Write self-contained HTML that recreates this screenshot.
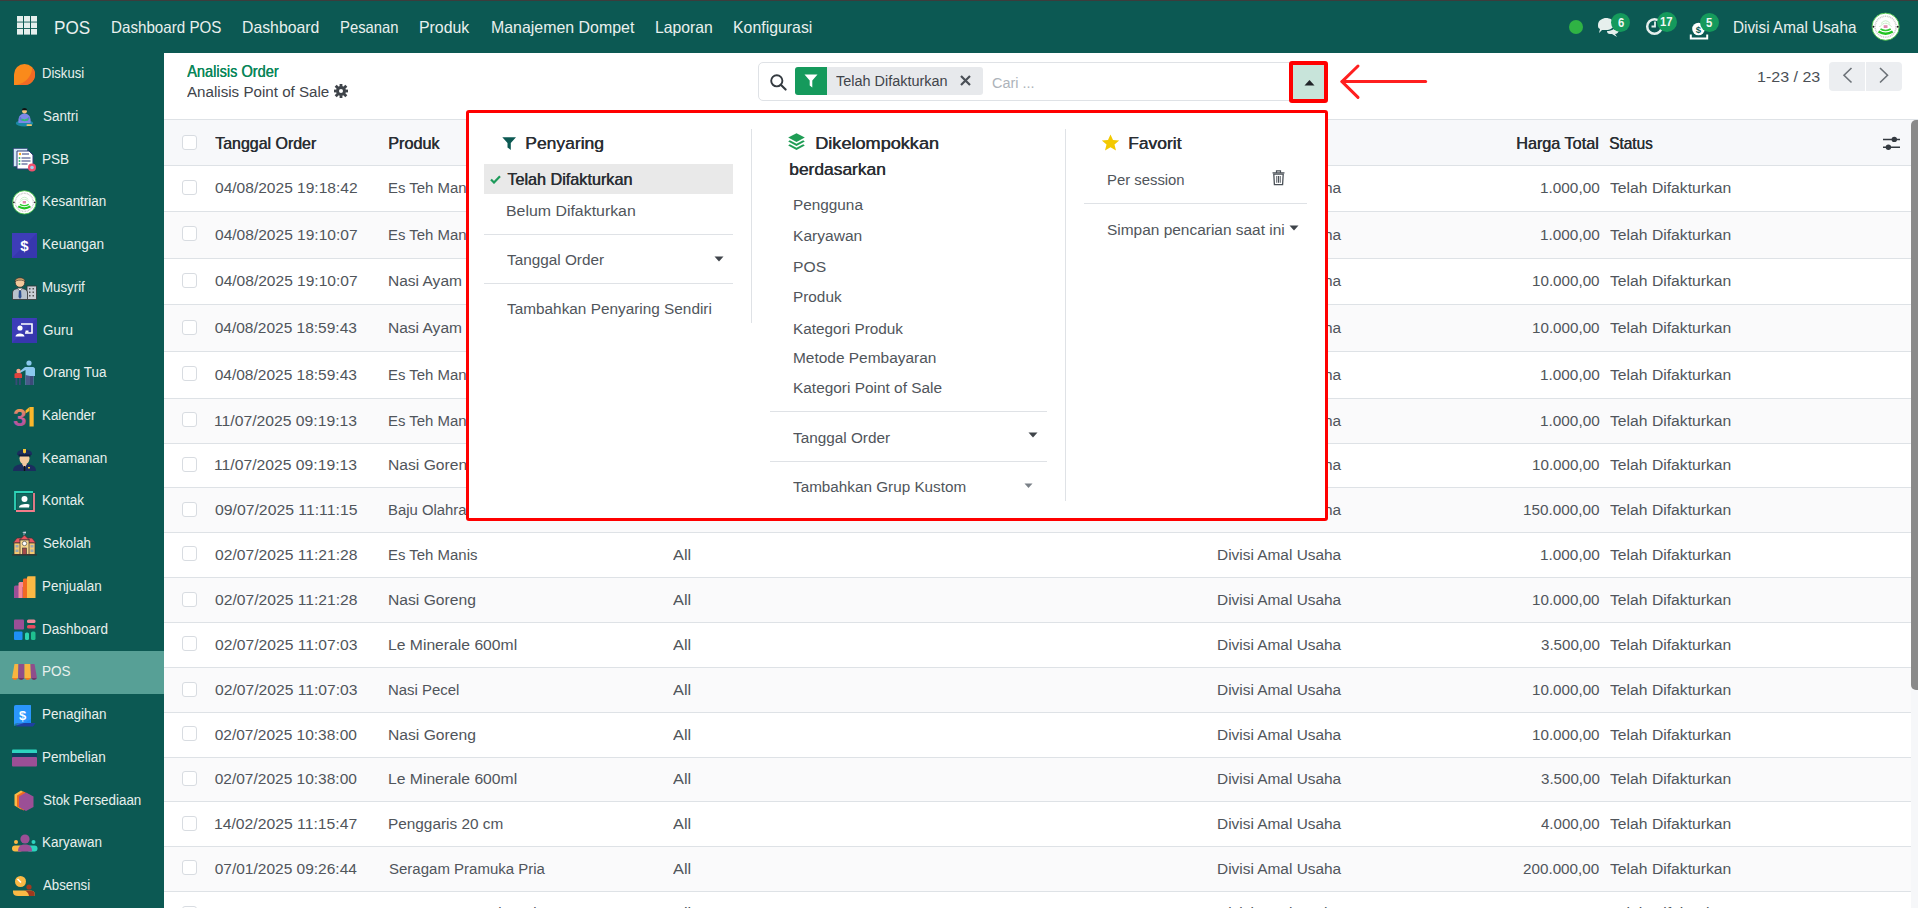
<!DOCTYPE html>
<html><head><meta charset="utf-8"><style>
html,body{margin:0;padding:0;}
body{width:1918px;height:908px;overflow:hidden;position:relative;background:#fff;font-family:"Liberation Sans",sans-serif;}
.t{position:absolute;white-space:nowrap;line-height:1;transform-origin:0 0;}
.r{position:absolute;display:block;}
</style></head><body>
<div class="r" style="left:0px;top:0px;width:1918px;height:1px;background:#3c3c3c;"></div>
<div class="r" style="left:0px;top:1px;width:1918px;height:52px;background:#0c5953;"></div>
<div class="r" style="left:0px;top:53px;width:164px;height:855px;background:#0c5953;"></div>
<div class="r" style="left:0px;top:651px;width:164px;height:43px;background:#57a096;"></div>
<svg class="r" style="left:17px;top:16px" width="20" height="19" viewBox="0 0 20 19"><rect x="0" y="0.0" width="6" height="5.6" fill="#e6efed"/><rect x="7" y="0.0" width="6" height="5.6" fill="#e6efed"/><rect x="14" y="0.0" width="6" height="5.6" fill="#e6efed"/><rect x="0" y="6.5" width="6" height="5.6" fill="#e6efed"/><rect x="7" y="6.5" width="6" height="5.6" fill="#e6efed"/><rect x="14" y="6.5" width="6" height="5.6" fill="#e6efed"/><rect x="0" y="13.0" width="6" height="5.6" fill="#e6efed"/><rect x="7" y="13.0" width="6" height="5.6" fill="#e6efed"/><rect x="14" y="13.0" width="6" height="5.6" fill="#e6efed"/></svg>
<div class="t" style="left:53.62px;top:19.00px;font-size:18px;color:#e9f0ee;transform:scaleX(0.9510);">POS</div>
<div class="t" style="left:111.26px;top:19.00px;font-size:16.5px;color:#e9f0ee;transform:scaleX(0.9191);">Dashboard POS</div>
<div class="t" style="left:242.31px;top:19.00px;font-size:16.5px;color:#e9f0ee;transform:scaleX(0.9579);">Dashboard</div>
<div class="t" style="left:340.39px;top:19.00px;font-size:16.5px;color:#e9f0ee;transform:scaleX(0.8995);">Pesanan</div>
<div class="t" style="left:419.00px;top:19.00px;font-size:16.5px;color:#e9f0ee;transform:scaleX(0.9617);">Produk</div>
<div class="t" style="left:490.60px;top:19.00px;font-size:16.5px;color:#e9f0ee;transform:scaleX(0.9650);">Manajemen Dompet</div>
<div class="t" style="left:655.21px;top:19.00px;font-size:16.5px;color:#e9f0ee;transform:scaleX(0.9544);">Laporan</div>
<div class="t" style="left:733.20px;top:19.00px;font-size:16.5px;color:#e9f0ee;transform:scaleX(0.9613);">Konfigurasi</div>
<div class="r" style="left:1569px;top:20px;width:14px;height:14px;border-radius:50%;background:#2fb344"></div>
<svg class="r" style="left:1596px;top:17px" width="24" height="20" viewBox="0 0 24 20"><path d="M2 8 C2 3,7 1,10 1 C14 1,18 3,18 7 C18 11,14 13,10 13 L6 13 L3 16 L4 12 C2 11,2 10,2 8Z" fill="#e6efed"/><path d="M11 14 C15 14,19 12,20 9 C22 10,23 12,23 13 C23 15,21 17,19 17 L21 20 L16 17 L14 17 C12 17,11 16,11 14Z" fill="#e6efed"/></svg>
<div class="r" style="left:1611.3px;top:12.899999999999999px;width:19.0px;height:19.0px;border-radius:50%;background:#159a5c"></div>
<div class="t" style="left:1617.67px;top:17.00px;font-size:12.5px;color:#f2f7f5;font-weight:bold;transform:scaleX(0.9000);">6</div>
<svg class="r" style="left:1645px;top:16px" width="22" height="20" viewBox="0 0 22 20"><circle cx="9.5" cy="10.5" r="7.3" fill="none" stroke="#e6efed" stroke-width="2.5"/><path d="M10 5.5 L10 10.5 L6.5 10.5" stroke="#e6efed" stroke-width="1.8" fill="none"/></svg>
<div class="r" style="left:1656.6px;top:11.600000000000001px;width:20px;height:20px;border-radius:50%;background:#159a5c"></div>
<div class="t" style="left:1660.25px;top:16.00px;font-size:12.5px;color:#f2f7f5;font-weight:bold;transform:scaleX(0.9000);">17</div>
<svg class="r" style="left:1689px;top:18px" width="22" height="22" viewBox="0 0 22 22"><circle cx="9.5" cy="11" r="6.3" fill="#ffffff"/><text x="9.5" y="14.6" font-size="9.5" text-anchor="middle" fill="#0c5953" font-family="Liberation Sans" font-weight="bold">$</text><path d="M1.8 16.5 L1.8 20.5 L18.2 20.5 L18.2 16.5" fill="none" stroke="#ffffff" stroke-width="2"/></svg>
<div class="r" style="left:1700.0px;top:13.0px;width:19.0px;height:19.0px;border-radius:50%;background:#159a5c"></div>
<div class="t" style="left:1706.35px;top:17.00px;font-size:12.5px;color:#f2f7f5;font-weight:bold;transform:scaleX(0.9000);">5</div>
<div class="t" style="left:1733.05px;top:19.00px;font-size:16.5px;color:#e9f0ee;transform:scaleX(0.9282);">Divisi Amal Usaha</div>
<svg class="r" style="left:1871px;top:12px" width="30" height="30" viewBox="0 0 30 30"><circle cx="14.6" cy="14.7" r="13.6" fill="#ffffff" stroke="#43c043" stroke-width="0.9"/><circle cx="14.6" cy="14.7" r="10.5" fill="none" stroke="#c9c9c9" stroke-width="1.6" stroke-dasharray="1 0.8"/><circle cx="14.6" cy="14.7" r="8.2" fill="#fff"/><path d="M8.5 15 Q14.6 7.5 20.7 15" fill="none" stroke="#9ade9a" stroke-width="0.9" stroke-dasharray="1 0.6"/><path d="M10 11.5 Q14.6 6 19.2 11.5" fill="none" stroke="#b5e8b5" stroke-width="0.8"/><rect x="12.7" y="13.2" width="3.8" height="2.8" fill="#e08ab0"/><path d="M9.5 17 Q14.6 20 19.7 17" fill="none" stroke="#2ecc2e" stroke-width="1.6"/><path d="M7.5 19.5 Q14.6 24 21.7 19.5" fill="none" stroke="#22c422" stroke-width="2.4"/><circle cx="2.4" cy="14.7" r="1" fill="#222"/><circle cx="26.8" cy="14.7" r="1" fill="#222"/></svg>
<div class="t" style="left:42.25px;top:65.00px;font-size:15.5px;color:#e8f0ee;transform:scaleX(0.8431);">Diskusi</div>
<div class="t" style="left:42.69px;top:108.00px;font-size:15.5px;color:#e8f0ee;transform:scaleX(0.8673);">Santri</div>
<div class="t" style="left:42.20px;top:151.00px;font-size:15.5px;color:#e8f0ee;transform:scaleX(0.8765);">PSB</div>
<div class="t" style="left:42.22px;top:193.00px;font-size:15.5px;color:#e8f0ee;transform:scaleX(0.8670);">Kesantrian</div>
<div class="t" style="left:42.20px;top:236.00px;font-size:15.5px;color:#e8f0ee;transform:scaleX(0.8776);">Keuangan</div>
<div class="t" style="left:42.23px;top:279.00px;font-size:15.5px;color:#e8f0ee;transform:scaleX(0.8573);">Musyrif</div>
<div class="t" style="left:42.65px;top:322.00px;font-size:15.5px;color:#e8f0ee;transform:scaleX(0.8683);">Guru</div>
<div class="t" style="left:42.69px;top:364.00px;font-size:15.5px;color:#e8f0ee;transform:scaleX(0.8657);">Orang Tua</div>
<div class="t" style="left:42.22px;top:407.00px;font-size:15.5px;color:#e8f0ee;transform:scaleX(0.8618);">Kalender</div>
<div class="t" style="left:42.21px;top:450.00px;font-size:15.5px;color:#e8f0ee;transform:scaleX(0.8701);">Keamanan</div>
<div class="t" style="left:42.21px;top:492.00px;font-size:15.5px;color:#e8f0ee;transform:scaleX(0.8686);">Kontak</div>
<div class="t" style="left:42.70px;top:535.00px;font-size:15.5px;color:#e8f0ee;transform:scaleX(0.8547);">Sekolah</div>
<div class="t" style="left:42.22px;top:578.00px;font-size:15.5px;color:#e8f0ee;transform:scaleX(0.8645);">Penjualan</div>
<div class="t" style="left:42.21px;top:621.00px;font-size:15.5px;color:#e8f0ee;transform:scaleX(0.8706);">Dashboard</div>
<div class="t" style="left:42.21px;top:663.00px;font-size:15.5px;color:#e8f0ee;transform:scaleX(0.8743);">POS</div>
<div class="t" style="left:42.21px;top:706.00px;font-size:15.5px;color:#e8f0ee;transform:scaleX(0.8702);">Penagihan</div>
<div class="t" style="left:42.21px;top:749.00px;font-size:15.5px;color:#e8f0ee;transform:scaleX(0.8709);">Pembelian</div>
<div class="t" style="left:42.69px;top:792.00px;font-size:15.5px;color:#e8f0ee;transform:scaleX(0.8644);">Stok Persediaan</div>
<div class="t" style="left:42.21px;top:834.00px;font-size:15.5px;color:#e8f0ee;transform:scaleX(0.8715);">Karyawan</div>
<div class="t" style="left:43.26px;top:877.00px;font-size:15.5px;color:#e8f0ee;transform:scaleX(0.8554);">Absensi</div>
<svg class="r" style="left:14px;top:64px" width="21" height="21" viewBox="0 0 21 21"><path d="M0 21 L0 10.5 A10.5 10.5 0 1 1 10.5 21Z" fill="#fa8a1b"/><path d="M18.2 3.3 A10.5 10.5 0 0 1 10.5 21 L2.5 21 C11.5 19,18.2 12.5,18.2 3.3Z" fill="#f26a24"/></svg>
<svg class="r" style="left:15px;top:107px" width="20" height="20" viewBox="0 0 20 20"><ellipse cx="9.5" cy="16.3" rx="8.7" ry="3.2" fill="#1b88a6"/><path d="M3.5 16 C3 11,4 7,9.5 6.5 C15 7,16 11,15.5 16Z" fill="#7d89e8"/><path d="M4.5 10 C4 13,6 14.5,9 14 L9 12.5 C7 12.5,6 12,6 10Z" fill="#6574d6"/><path d="M14.5 10 C15 13,13 14.5,10 14 L10 12.5 C12 12.5,13 12,13 10Z" fill="#6574d6"/><path d="M6.5 11.5 L9.5 12.5 L13.5 11 L13 13.5 L9.5 14.2 L6.5 13.2Z" fill="#2fbf71"/><circle cx="9.5" cy="4.2" r="2.4" fill="#f2c27b"/><path d="M6.9 3 C6.9 0.2,12.1 0.2,12.1 3 L12.1 3.3 L6.9 3.3Z" fill="#111"/><rect x="11.5" y="17.3" width="5.5" height="1.8" rx="0.8" fill="#f5c76b"/></svg>
<svg class="r" style="left:13px;top:148px" width="24" height="24" viewBox="0 0 24 24"><rect x="0.5" y="0.5" width="14" height="18" fill="#d4e9f7" stroke="#2f3b7a" stroke-width="0.6"/><path d="M4 3 L16 3 L20 7 L20 21 L4 21Z" fill="#ffffff" stroke="#2f3b7a" stroke-width="1"/><circle cx="7" cy="6" r="1.2" fill="#f6a51f"/><rect x="9" y="5.5" width="7" height="1" fill="#2f3b7a"/><circle cx="6.5" cy="10" r="1" fill="#3cb878"/><rect x="8.5" y="9.5" width="9" height="1" fill="#2f3b7a"/><circle cx="6.5" cy="13" r="1" fill="#3cb878"/><rect x="8.5" y="12.5" width="9" height="1" fill="#2f3b7a"/><circle cx="6.5" cy="16" r="1" fill="#3cb878"/><rect x="8.5" y="15.5" width="6" height="1" fill="#2f3b7a"/><circle cx="19" cy="19.5" r="4" fill="#f0506e"/><circle cx="19" cy="19.5" r="1.8" fill="#9fd0f0"/></svg>
<svg class="r" style="left:12px;top:190px" width="25" height="25" viewBox="0 0 25 25"><g transform="translate(-0.2 -0.3) scale(0.86)"><circle cx="14.6" cy="14.7" r="13.6" fill="#ffffff" stroke="#43c043" stroke-width="1"/><circle cx="14.6" cy="14.7" r="10.5" fill="none" stroke="#c9c9c9" stroke-width="1.6" stroke-dasharray="1 0.8"/><circle cx="14.6" cy="14.7" r="8.2" fill="#fff"/><path d="M8.5 15 Q14.6 7.5 20.7 15" fill="none" stroke="#9ade9a" stroke-width="0.9" stroke-dasharray="1 0.6"/><path d="M10 11.5 Q14.6 6 19.2 11.5" fill="none" stroke="#b5e8b5" stroke-width="0.8"/><rect x="12.7" y="13.2" width="3.8" height="2.8" fill="#e08ab0"/><path d="M9.5 17 Q14.6 20 19.7 17" fill="none" stroke="#2ecc2e" stroke-width="1.6"/><path d="M7.5 19.5 Q14.6 24 21.7 19.5" fill="none" stroke="#22c422" stroke-width="2.4"/><circle cx="2.4" cy="14.7" r="1" fill="#222"/><circle cx="26.8" cy="14.7" r="1" fill="#222"/></g></svg>
<svg class="r" style="left:12px;top:233px" width="25" height="25" viewBox="0 0 25 25"><rect width="25" height="25" fill="#3d3db8"/><path d="M0 25 L25 0 L25 25Z" fill="#3434a6" opacity="0.6"/><text x="12.5" y="18" font-size="15" font-weight="bold" text-anchor="middle" fill="#fff" font-family="Liberation Sans">$</text></svg>
<svg class="r" style="left:12px;top:276px" width="25" height="24" viewBox="0 0 25 24"><rect x="15" y="10" width="9.5" height="13.5" fill="#c9ced6" stroke="#333" stroke-width="0.8"/><rect x="17" y="12" width="1.5" height="1.5" fill="#555"/><rect x="17" y="15.5" width="1.5" height="1.5" fill="#555"/><rect x="17" y="19" width="1.5" height="1.5" fill="#555"/><rect x="20.5" y="12" width="1.5" height="1.5" fill="#555"/><rect x="20.5" y="15.5" width="1.5" height="1.5" fill="#555"/><rect x="20.5" y="19" width="1.5" height="1.5" fill="#555"/><path d="M0.5 23.5 L0.5 17 C0.5 14,3 12.5,8 12.5 C13 12.5,15.5 14,15.5 17 L15.5 23.5Z" fill="#b8c2cc" stroke="#333" stroke-width="0.8"/><path d="M7 13 L9 13 L9.5 21 L8 23 L6.5 21Z" fill="#2d4f8f"/><circle cx="8" cy="6.5" r="4.8" fill="#f3c99b" stroke="#333" stroke-width="0.8"/><path d="M3 6 C2.5 0.5,13.5 0.5,13 6 C12 3.5,4 3.5,3 6Z" fill="#d9a86c" stroke="#333" stroke-width="0.6"/><path d="M5.5 12.5 L8 15 L10.5 12.5" fill="#fff" stroke="#333" stroke-width="0.5"/></svg>
<svg class="r" style="left:12px;top:318px" width="25" height="25" viewBox="0 0 25 25"><rect width="25" height="25" fill="#3d3db8"/><path d="M0 25 L25 0 L25 25Z" fill="#3434a6" opacity="0.6"/><path d="M9 6 L20 6 L20 15 L13 15" fill="none" stroke="#fff" stroke-width="1.6"/><circle cx="8" cy="10" r="2.6" fill="#fff"/><path d="M3.5 18.5 C3.5 14.5,12.5 14.5,12.5 18.5Z" fill="#fff"/><rect x="13.5" y="12.5" width="3" height="2" fill="#fff"/></svg>
<svg class="r" style="left:14px;top:360px" width="22" height="26" viewBox="0 0 22 26"><circle cx="15" cy="3" r="2.6" fill="#8bc8ee"/><path d="M11 7 L19 7 C20 7,21 8,21 9 L21 16 L19.5 16 L19.5 25 L16 25 L16 17 L14.5 17 L14.5 25 L11.5 25 L11.5 10 L6 13 L5 12 Z" fill="#8bc8ee"/><path d="M11.5 15 L11.5 25 L16 25 L16 16Z" fill="#4a5a8a"/><path d="M19.5 16 L19.5 25 L16 25 L16 16Z" fill="#3c4a7a"/><circle cx="4.5" cy="11" r="2.2" fill="#f5a58a"/><path d="M0.5 14 C0.5 13,2 13,4.5 13 C7 13,8 13.5,8 15 L8 18 L0.5 18Z" fill="#e0433d"/><rect x="1.5" y="18" width="1.8" height="7" fill="#3a4a78"/><rect x="5" y="18" width="1.8" height="7" fill="#3a4a78"/></svg>
<svg class="r" style="left:13px;top:405px" width="24" height="23" viewBox="0 0 24 23"><defs><linearGradient id="g31" x1="0" y1="0" x2="0" y2="1"><stop offset="0" stop-color="#fbb72c"/><stop offset="0.55" stop-color="#c65b9f"/><stop offset="1" stop-color="#9c4f96"/></linearGradient></defs><text x="0" y="21" font-size="24" font-weight="bold" fill="url(#g31)" font-family="Liberation Sans" letter-spacing="-1">3</text><rect x="16.5" y="2" width="4.2" height="19.5" fill="#fbb72c"/><path d="M16.5 2 L12.5 5.5 L12.5 8.5 L16.5 6Z" fill="#fbb72c"/></svg>
<svg class="r" style="left:12px;top:446px" width="25" height="26" viewBox="0 0 25 26"><path d="M1 25 C1 20,5 18,12.5 18 C20 18,24 20,24 25Z" fill="#1b2d5e"/><path d="M10 18 L15 18 L12.5 22Z" fill="#f2c9a0"/><rect x="11.8" y="20" width="1.4" height="5" fill="#111"/><rect x="16" y="21" width="2" height="1.5" fill="#f5c73b"/><ellipse cx="12.5" cy="12.5" rx="5" ry="6" fill="#f2c9a0"/><path d="M5 8 C5 2,20 2,20 8 L20 9 L5 9Z" fill="#1b2d5e"/><rect x="6.5" y="8.5" width="12" height="2" fill="#0e1a3a"/><path d="M11 3 L14 3 L14 6.5 L12.5 7.5 L11 6.5Z" fill="#f5c73b"/></svg>
<svg class="r" style="left:14px;top:491px" width="21" height="21" viewBox="0 0 21 21"><path d="M1 19 L1 1 L19 1" fill="none" stroke="#2ed3b7" stroke-width="1.8"/><path d="M20 2 L20 20 L2 20" fill="none" stroke="#f47c8a" stroke-width="1.8"/><rect x="3" y="3" width="15" height="15" fill="#1b7367" opacity="0.6"/><circle cx="10.5" cy="8" r="3" fill="#fff"/><path d="M5 16.5 C5 12.5,15.5 12.5,15.5 14 L15 16.5Z" fill="#fff"/></svg>
<svg class="r" style="left:12px;top:531px" width="25" height="25" viewBox="0 0 25 25"><rect x="11.5" y="0.5" width="1" height="4" fill="#9ab"/><path d="M10 1.5 L14 0.5 L14 2.5Z" fill="#c5d0dc"/><path d="M1 12 L5 7 L20 7 L24 12Z" fill="#e8555f" stroke="#333" stroke-width="0.7"/><path d="M7.5 9 L12.5 4 L17.5 9Z" fill="#e8555f" stroke="#333" stroke-width="0.7"/><rect x="2" y="12" width="21" height="11.5" fill="#f4c86f" stroke="#333" stroke-width="0.7"/><rect x="8" y="9" width="9" height="14.5" fill="#f7d78e" stroke="#333" stroke-width="0.7"/><circle cx="12.5" cy="12.5" r="2.2" fill="#fff" stroke="#333" stroke-width="0.6"/><rect x="10.5" y="17" width="4" height="6.5" fill="#a34a4a" stroke="#333" stroke-width="0.6"/><rect x="3.5" y="14" width="3" height="2.5" fill="#9aa7b5"/><rect x="3.5" y="18.5" width="3" height="2.5" fill="#9aa7b5"/><rect x="18.5" y="14" width="3" height="2.5" fill="#9aa7b5"/><rect x="18.5" y="18.5" width="3" height="2.5" fill="#9aa7b5"/><rect x="0" y="23.3" width="25" height="1.2" fill="#333"/></svg>
<svg class="r" style="left:14px;top:576px" width="22" height="22" viewBox="0 0 22 22"><path d="M0 22 L0 11 Q0 9.5,1.5 9.5 L8 9.5 L8 22Z" fill="#9b4f96"/><path d="M4.5 22 L4.5 7.5 Q4.5 6,6 6 L12 6 L12 22Z" fill="#f48a9a"/><path d="M8.5 22 L8.5 11 L12 11 L12 22Z" fill="#8e2f4f" opacity="0.7"/><path d="M9 22 L9 3.5 Q9 2.5,10.5 2.5 L16 2.5 L16 22Z" fill="#f16a23"/><path d="M13 22 L13 1.5 Q13 0.2,14.5 0.2 L21.5 0.2 L21.5 22Z" fill="#fbb945"/></svg>
<svg class="r" style="left:14px;top:619px" width="22" height="22" viewBox="0 0 22 22"><rect x="0" y="0.5" width="10" height="10" rx="1" fill="#9b4f96"/><rect x="13" y="0.5" width="8.5" height="3.5" rx="1.5" fill="#f48a9a"/><rect x="13" y="6" width="8.5" height="3.5" rx="1.5" fill="#e84a5f"/><rect x="0" y="12.5" width="8.5" height="8.5" rx="1" fill="#1e8ff5"/><rect x="11" y="13.5" width="4" height="7.5" rx="1.5" fill="#2dd4b0"/><rect x="17" y="12.5" width="4.5" height="8.5" rx="1.5" fill="#1fbf8f"/></svg>
<svg class="r" style="left:12px;top:663px" width="25" height="19" viewBox="0 0 25 19"><path d="M2.5 1 L6.5 1 L6 15 L0 15Z" fill="#f9b540"/><path d="M6.5 1 L12.5 1 L12.5 15 L6 15Z" fill="#8f4e8b"/><path d="M12.5 1 L18.5 1 L19 15 L12.5 15Z" fill="#f9b540"/><path d="M18.5 1 L22.5 1 L25 15 L19 15Z" fill="#8f4e8b"/><path d="M0 15 Q3 19,6 15Z" fill="#f27b1f"/><path d="M6 15 Q9.2 19,12.5 15Z" fill="#6d3669"/><path d="M12.5 15 Q15.7 19,19 15Z" fill="#f27b1f"/><path d="M19 15 Q22 19,25 15Z" fill="#6d3669"/></svg>
<svg class="r" style="left:14px;top:705px" width="22" height="22" viewBox="0 0 22 22"><path d="M2 0 L16 0 Q17 0,17 1 L17 18 L4 18 Q0 18,0 21 L0 2 Q0 0,2 0Z" fill="#1d8cf8"/><path d="M4 18 L21.5 18 L19 21.5 L2 21.5Z" fill="#1e3fa0"/><path d="M0 2 Q0 0,2 0 L17 0 L17 14 Q10 19,0 21Z" fill="#38a0ff" opacity="0.5"/><text x="8.5" y="14.5" font-size="13" font-weight="bold" text-anchor="middle" fill="#fff" font-family="Liberation Sans">$</text></svg>
<svg class="r" style="left:12px;top:749px" width="25" height="18" viewBox="0 0 25 18"><rect x="0" y="0.5" width="25" height="4.5" rx="1" fill="#2dd4bf"/><rect x="0" y="4" width="25" height="4.5" fill="#0c3f5e"/><rect x="0" y="8" width="25" height="9.5" rx="1" fill="#9b4f96"/></svg>
<svg class="r" style="left:14px;top:790px" width="21" height="22" viewBox="0 0 21 22"><path d="M7 0.5 L14 4.5 L14 15.5 L7 19.5 L0.5 15.5 L0.5 4.5Z" fill="#fbb945"/><path d="M9.5 1.5 L16.5 5.5 L16.5 16.5 L9.5 20.5 L3 16.5 L3 5.5Z" fill="#f16a23"/><path d="M12 2.5 L19.5 6.5 L19.5 17 L12 21 L5 17 L5 6.5Z" fill="#9b4f96"/></svg>
<svg class="r" style="left:12px;top:834px" width="26" height="19" viewBox="0 0 26 19"><circle cx="13" cy="5" r="4.6" fill="#9b4f96"/><circle cx="4" cy="8" r="2" fill="#fbb945"/><circle cx="21.5" cy="8" r="2" fill="#2dd4bf"/><rect x="0" y="11.5" width="11" height="6" rx="3" fill="#fbb945"/><rect x="14.5" y="11.5" width="11" height="6" rx="3" fill="#2dd4bf"/><path d="M6 17.5 C6 12,9 10.5,13 10.5 C17 10.5,20 12,20 17.5Z" fill="#9b4f96"/></svg>
<svg class="r" style="left:13px;top:876px" width="23" height="21" viewBox="0 0 23 21"><circle cx="7.5" cy="5.5" r="5.5" fill="#fbb945"/><path d="M4.5 3 L8 6.5" stroke="#fff" stroke-width="1.6"/><circle cx="16" cy="11" r="2.6" fill="#a0391f"/><path d="M0 14.5 L17 14.5 Q21.5 14.5,21.5 17 L21.5 20 L5 20 Q0 20,0 16Z" fill="#fbb945"/><path d="M11 14.5 L17 14.5 Q21.5 14.5,21.5 17 L21.5 20 L16 20 Q15 15,11 14.5Z" fill="#a0391f"/></svg>
<div class="t" style="left:187.26px;top:63.00px;font-size:16.2px;color:#088659;transform:scaleX(0.9000);text-shadow:0.45px 0 0 #088659;">Analisis Order</div>
<div class="t" style="left:187.25px;top:84.00px;font-size:15.5px;color:#3f444a;transform:scaleX(0.9772);">Analisis Point of Sale</div>
<svg class="r" style="left:334px;top:84px" width="14" height="14" viewBox="0 0 14 14"><rect x="5.6" y="-0.5" width="2.8" height="3.2" fill="#3f444a" transform="rotate(0 7 7)"/><rect x="5.6" y="-0.5" width="2.8" height="3.2" fill="#3f444a" transform="rotate(45 7 7)"/><rect x="5.6" y="-0.5" width="2.8" height="3.2" fill="#3f444a" transform="rotate(90 7 7)"/><rect x="5.6" y="-0.5" width="2.8" height="3.2" fill="#3f444a" transform="rotate(135 7 7)"/><rect x="5.6" y="-0.5" width="2.8" height="3.2" fill="#3f444a" transform="rotate(180 7 7)"/><rect x="5.6" y="-0.5" width="2.8" height="3.2" fill="#3f444a" transform="rotate(225 7 7)"/><rect x="5.6" y="-0.5" width="2.8" height="3.2" fill="#3f444a" transform="rotate(270 7 7)"/><rect x="5.6" y="-0.5" width="2.8" height="3.2" fill="#3f444a" transform="rotate(315 7 7)"/><circle cx="7" cy="7" r="5" fill="#3f444a"/><circle cx="7" cy="7" r="2" fill="#fff"/></svg>
<div class="r" style="left:758px;top:62px;width:570px;height:39px;border:1px solid #dfe2e6;border-radius:5px;box-sizing:border-box;background:#fff"></div>
<svg class="r" style="left:770px;top:74px" width="17" height="17" viewBox="0 0 17 17"><circle cx="6.8" cy="6.8" r="5.6" fill="none" stroke="#343a40" stroke-width="1.9"/><path d="M10.8 10.8 L15.6 15.6" stroke="#343a40" stroke-width="2.1" stroke-linecap="round"/></svg>
<div class="r" style="left:795px;top:67px;width:188px;height:28px;border-radius:3px;background:#e7e9ec"></div>
<div class="r" style="left:795px;top:67px;width:32px;height:28px;border-radius:3px 0 0 3px;background:#159a5c"></div>
<svg class="r" style="left:804px;top:74px" width="14" height="14" viewBox="0 0 14 14"><path d="M0.5 0.5 L13.5 0.5 L8.3 6.5 L8.3 13.5 L5.7 11.5 L5.7 6.5Z" fill="#fff"/></svg>
<div class="t" style="left:836.17px;top:73.00px;font-size:15.5px;color:#3f444a;transform:scaleX(0.9320);">Telah Difakturkan</div>
<svg class="r" style="left:960px;top:75px" width="11" height="11" viewBox="0 0 11 11"><path d="M1 1 L10 10 M10 1 L1 10" stroke="#4a5057" stroke-width="2.2"/></svg>
<div class="t" style="left:991.70px;top:75.00px;font-size:15.5px;color:#adb3ba;transform:scaleX(0.9310);">Cari ...</div>
<div class="r" style="left:1289px;top:60.5px;width:39px;height:42.5px;border:4px solid #ff0000;border-radius:3px;box-sizing:border-box;background:#c8e4da"></div>
<svg class="r" style="left:1304px;top:79px" width="11" height="7" viewBox="0 0 11 7"><path d="M0.5 6.5 L5.5 1 L10.5 6.5Z" fill="#212529"/></svg>
<svg class="r" style="left:1338px;top:62px" width="92" height="40" viewBox="0 0 92 40"><path d="M4 19.6 L87.6 19.6" stroke="#ff1f1f" stroke-width="3" stroke-linecap="round"/><path d="M20 4 L4 19.6 L20 35.4" fill="none" stroke="#ff1f1f" stroke-width="3" stroke-linecap="round" stroke-linejoin="round"/></svg>
<div class="t" style="left:1756.91px;top:69.00px;font-size:15.5px;color:#4a4f55;transform:scaleX(1.0329);">1-23 / 23</div>
<div class="r" style="left:1829px;top:62px;width:36px;height:29px;border-radius:4px 0 0 4px;background:#eceef1"></div>
<div class="r" style="left:1866px;top:62px;width:36px;height:29px;border-radius:0 4px 4px 0;background:#eceef1"></div>
<svg class="r" style="left:1842px;top:67px" width="11" height="17" viewBox="0 0 11 17"><path d="M9.5 1 L2 8.2 L9.5 15.5" fill="none" stroke="#6c7278" stroke-width="1.6"/></svg>
<svg class="r" style="left:1879px;top:67px" width="11" height="17" viewBox="0 0 11 17"><path d="M1 1 L8.5 8.2 L1 15.5" fill="none" stroke="#6c7278" stroke-width="1.6"/></svg>
<div class="r" style="left:164px;top:119px;width:1747px;height:1px;background:#dee2e6;"></div>
<div class="r" style="left:164px;top:120px;width:1747px;height:45px;background:#f7f8fa;"></div>
<div class="r" style="left:164px;top:212px;width:1747px;height:46px;background:#fafafb;"></div>
<div class="r" style="left:164px;top:305px;width:1747px;height:46px;background:#fafafb;"></div>
<div class="r" style="left:164px;top:399px;width:1747px;height:44px;background:#fafafb;"></div>
<div class="r" style="left:164px;top:488px;width:1747px;height:44px;background:#fafafb;"></div>
<div class="r" style="left:164px;top:578px;width:1747px;height:44px;background:#fafafb;"></div>
<div class="r" style="left:164px;top:668px;width:1747px;height:44px;background:#fafafb;"></div>
<div class="r" style="left:164px;top:758px;width:1747px;height:43px;background:#fafafb;"></div>
<div class="r" style="left:164px;top:847px;width:1747px;height:44px;background:#fafafb;"></div>
<div class="r" style="left:164px;top:165px;width:1747px;height:1px;background:#dee2e6;"></div>
<div class="r" style="left:164px;top:211px;width:1747px;height:1px;background:#dee2e6;"></div>
<div class="r" style="left:164px;top:258px;width:1747px;height:1px;background:#dee2e6;"></div>
<div class="r" style="left:164px;top:304px;width:1747px;height:1px;background:#dee2e6;"></div>
<div class="r" style="left:164px;top:351px;width:1747px;height:1px;background:#dee2e6;"></div>
<div class="r" style="left:164px;top:398px;width:1747px;height:1px;background:#dee2e6;"></div>
<div class="r" style="left:164px;top:443px;width:1747px;height:1px;background:#dee2e6;"></div>
<div class="r" style="left:164px;top:487px;width:1747px;height:1px;background:#dee2e6;"></div>
<div class="r" style="left:164px;top:532px;width:1747px;height:1px;background:#dee2e6;"></div>
<div class="r" style="left:164px;top:577px;width:1747px;height:1px;background:#dee2e6;"></div>
<div class="r" style="left:164px;top:622px;width:1747px;height:1px;background:#dee2e6;"></div>
<div class="r" style="left:164px;top:667px;width:1747px;height:1px;background:#dee2e6;"></div>
<div class="r" style="left:164px;top:712px;width:1747px;height:1px;background:#dee2e6;"></div>
<div class="r" style="left:164px;top:757px;width:1747px;height:1px;background:#dee2e6;"></div>
<div class="r" style="left:164px;top:801px;width:1747px;height:1px;background:#dee2e6;"></div>
<div class="r" style="left:164px;top:846px;width:1747px;height:1px;background:#dee2e6;"></div>
<div class="r" style="left:164px;top:891px;width:1747px;height:1px;background:#dee2e6;"></div>
<div class="r" style="left:182px;top:134.5px;width:15px;height:15px;border:1px solid #d8dce1;border-radius:3px;box-sizing:border-box;background:#fff"></div>
<div class="t" style="left:214.96px;top:135.00px;font-size:16.4px;color:#2a2e33;transform:scaleX(0.9729);text-shadow:0.45px 0 0 #2a2e33;">Tanggal Order</div>
<div class="t" style="left:387.67px;top:135.00px;font-size:16.4px;color:#2a2e33;transform:scaleX(0.9881);text-shadow:0.45px 0 0 #2a2e33;">Produk</div>
<div class="t" style="left:1515.97px;top:135.00px;font-size:16.4px;color:#2a2e33;transform:scaleX(0.9883);text-shadow:0.45px 0 0 #2a2e33;">Harga Total</div>
<div class="t" style="left:1609.10px;top:135.00px;font-size:16.4px;color:#2a2e33;transform:scaleX(0.9391);text-shadow:0.45px 0 0 #2a2e33;">Status</div>
<svg class="r" style="left:1882px;top:134px" width="19" height="17" viewBox="0 0 19 17"><path d="M1 5.4 L18 5.4 M1 13.3 L18 13.3" stroke="#343a40" stroke-width="1.5"/><circle cx="12.3" cy="5.4" r="2.7" fill="#343a40"/><circle cx="6.4" cy="13.3" r="2.7" fill="#343a40"/></svg>
<div class="r" style="left:182px;top:180px;width:15px;height:15px;border:1px solid #d8dce1;border-radius:3px;box-sizing:border-box;background:#fff"></div>
<div class="t" style="left:214.70px;top:180.00px;font-size:15.5px;color:#50555b;transform:scaleX(1.0025);">04/08/2025 19:18:42</div>
<div class="t" style="left:388.09px;top:180.00px;font-size:15.5px;color:#50555b;transform:scaleX(0.9643);">Es Teh Manis</div>
<div class="t" style="left:672.75px;top:180.00px;font-size:15.5px;color:#50555b;transform:scaleX(1.0526);">All</div>
<div class="t" style="left:1216.96px;top:180.00px;font-size:15.5px;color:#50555b;transform:scaleX(0.9943);">Divisi Amal Usaha</div>
<div class="t" style="left:1539.76px;top:180.00px;font-size:15.5px;color:#50555b;transform:scaleX(0.9898);">1.000,00</div>
<div class="t" style="left:1610.05px;top:180.00px;font-size:15.5px;color:#50555b;transform:scaleX(1.0131);">Telah Difakturkan</div>
<div class="r" style="left:182px;top:226px;width:15px;height:15px;border:1px solid #d8dce1;border-radius:3px;box-sizing:border-box;background:#fff"></div>
<div class="t" style="left:214.70px;top:227.00px;font-size:15.5px;color:#50555b;transform:scaleX(1.0025);">04/08/2025 19:10:07</div>
<div class="t" style="left:388.09px;top:227.00px;font-size:15.5px;color:#50555b;transform:scaleX(0.9643);">Es Teh Manis</div>
<div class="t" style="left:672.75px;top:227.00px;font-size:15.5px;color:#50555b;transform:scaleX(1.0526);">All</div>
<div class="t" style="left:1216.96px;top:227.00px;font-size:15.5px;color:#50555b;transform:scaleX(0.9943);">Divisi Amal Usaha</div>
<div class="t" style="left:1539.76px;top:227.00px;font-size:15.5px;color:#50555b;transform:scaleX(0.9898);">1.000,00</div>
<div class="t" style="left:1610.05px;top:227.00px;font-size:15.5px;color:#50555b;transform:scaleX(1.0131);">Telah Difakturkan</div>
<div class="r" style="left:182px;top:273px;width:15px;height:15px;border:1px solid #d8dce1;border-radius:3px;box-sizing:border-box;background:#fff"></div>
<div class="t" style="left:214.70px;top:273.00px;font-size:15.5px;color:#50555b;transform:scaleX(1.0025);">04/08/2025 19:10:07</div>
<div class="t" style="left:388.05px;top:273.00px;font-size:15.5px;color:#50555b;transform:scaleX(1.0021);">Nasi Ayam</div>
<div class="t" style="left:672.75px;top:273.00px;font-size:15.5px;color:#50555b;transform:scaleX(1.0526);">All</div>
<div class="t" style="left:1216.96px;top:273.00px;font-size:15.5px;color:#50555b;transform:scaleX(0.9943);">Divisi Amal Usaha</div>
<div class="t" style="left:1531.87px;top:273.00px;font-size:15.5px;color:#50555b;transform:scaleX(0.9799);">10.000,00</div>
<div class="t" style="left:1610.05px;top:273.00px;font-size:15.5px;color:#50555b;transform:scaleX(1.0131);">Telah Difakturkan</div>
<div class="r" style="left:182px;top:320px;width:15px;height:15px;border:1px solid #d8dce1;border-radius:3px;box-sizing:border-box;background:#fff"></div>
<div class="t" style="left:214.70px;top:320.00px;font-size:15.5px;color:#50555b;">04/08/2025 18:59:43</div>
<div class="t" style="left:388.05px;top:320.00px;font-size:15.5px;color:#50555b;transform:scaleX(1.0021);">Nasi Ayam</div>
<div class="t" style="left:672.75px;top:320.00px;font-size:15.5px;color:#50555b;transform:scaleX(1.0526);">All</div>
<div class="t" style="left:1216.96px;top:320.00px;font-size:15.5px;color:#50555b;transform:scaleX(0.9943);">Divisi Amal Usaha</div>
<div class="t" style="left:1531.87px;top:320.00px;font-size:15.5px;color:#50555b;transform:scaleX(0.9799);">10.000,00</div>
<div class="t" style="left:1610.05px;top:320.00px;font-size:15.5px;color:#50555b;transform:scaleX(1.0131);">Telah Difakturkan</div>
<div class="r" style="left:182px;top:366px;width:15px;height:15px;border:1px solid #d8dce1;border-radius:3px;box-sizing:border-box;background:#fff"></div>
<div class="t" style="left:214.70px;top:367.00px;font-size:15.5px;color:#50555b;">04/08/2025 18:59:43</div>
<div class="t" style="left:388.09px;top:367.00px;font-size:15.5px;color:#50555b;transform:scaleX(0.9643);">Es Teh Manis</div>
<div class="t" style="left:672.75px;top:367.00px;font-size:15.5px;color:#50555b;transform:scaleX(1.0526);">All</div>
<div class="t" style="left:1216.96px;top:367.00px;font-size:15.5px;color:#50555b;transform:scaleX(0.9943);">Divisi Amal Usaha</div>
<div class="t" style="left:1539.76px;top:367.00px;font-size:15.5px;color:#50555b;transform:scaleX(0.9898);">1.000,00</div>
<div class="t" style="left:1610.05px;top:367.00px;font-size:15.5px;color:#50555b;transform:scaleX(1.0131);">Telah Difakturkan</div>
<div class="r" style="left:182px;top:412px;width:15px;height:15px;border:1px solid #d8dce1;border-radius:3px;box-sizing:border-box;background:#fff"></div>
<div class="t" style="left:214.13px;top:413.00px;font-size:15.5px;color:#50555b;transform:scaleX(1.0140);">11/07/2025 09:19:13</div>
<div class="t" style="left:388.09px;top:413.00px;font-size:15.5px;color:#50555b;transform:scaleX(0.9643);">Es Teh Manis</div>
<div class="t" style="left:672.75px;top:413.00px;font-size:15.5px;color:#50555b;transform:scaleX(1.0526);">All</div>
<div class="t" style="left:1216.96px;top:413.00px;font-size:15.5px;color:#50555b;transform:scaleX(0.9943);">Divisi Amal Usaha</div>
<div class="t" style="left:1539.76px;top:413.00px;font-size:15.5px;color:#50555b;transform:scaleX(0.9898);">1.000,00</div>
<div class="t" style="left:1610.05px;top:413.00px;font-size:15.5px;color:#50555b;transform:scaleX(1.0131);">Telah Difakturkan</div>
<div class="r" style="left:182px;top:457px;width:15px;height:15px;border:1px solid #d8dce1;border-radius:3px;box-sizing:border-box;background:#fff"></div>
<div class="t" style="left:214.13px;top:457.00px;font-size:15.5px;color:#50555b;transform:scaleX(1.0140);">11/07/2025 09:19:13</div>
<div class="t" style="left:388.04px;top:457.00px;font-size:15.5px;color:#50555b;transform:scaleX(1.0094);">Nasi Goreng</div>
<div class="t" style="left:672.75px;top:457.00px;font-size:15.5px;color:#50555b;transform:scaleX(1.0526);">All</div>
<div class="t" style="left:1216.96px;top:457.00px;font-size:15.5px;color:#50555b;transform:scaleX(0.9943);">Divisi Amal Usaha</div>
<div class="t" style="left:1531.87px;top:457.00px;font-size:15.5px;color:#50555b;transform:scaleX(0.9799);">10.000,00</div>
<div class="t" style="left:1610.05px;top:457.00px;font-size:15.5px;color:#50555b;transform:scaleX(1.0131);">Telah Difakturkan</div>
<div class="r" style="left:182px;top:502px;width:15px;height:15px;border:1px solid #d8dce1;border-radius:3px;box-sizing:border-box;background:#fff"></div>
<div class="t" style="left:214.69px;top:502.00px;font-size:15.5px;color:#50555b;transform:scaleX(1.0180);">09/07/2025 11:11:15</div>
<div class="t" style="left:388.10px;top:502.00px;font-size:15.5px;color:#50555b;transform:scaleX(0.9590);">Baju Olahraga</div>
<div class="t" style="left:672.75px;top:502.00px;font-size:15.5px;color:#50555b;transform:scaleX(1.0526);">All</div>
<div class="t" style="left:1216.96px;top:502.00px;font-size:15.5px;color:#50555b;transform:scaleX(0.9943);">Divisi Amal Usaha</div>
<div class="t" style="left:1522.86px;top:502.00px;font-size:15.5px;color:#50555b;transform:scaleX(0.9875);">150.000,00</div>
<div class="t" style="left:1610.05px;top:502.00px;font-size:15.5px;color:#50555b;transform:scaleX(1.0131);">Telah Difakturkan</div>
<div class="r" style="left:182px;top:546px;width:15px;height:15px;border:1px solid #d8dce1;border-radius:3px;box-sizing:border-box;background:#fff"></div>
<div class="t" style="left:214.69px;top:547.00px;font-size:15.5px;color:#50555b;transform:scaleX(1.0100);">02/07/2025 11:21:28</div>
<div class="t" style="left:388.09px;top:547.00px;font-size:15.5px;color:#50555b;transform:scaleX(0.9643);">Es Teh Manis</div>
<div class="t" style="left:672.75px;top:547.00px;font-size:15.5px;color:#50555b;transform:scaleX(1.0526);">All</div>
<div class="t" style="left:1216.96px;top:547.00px;font-size:15.5px;color:#50555b;transform:scaleX(0.9943);">Divisi Amal Usaha</div>
<div class="t" style="left:1539.76px;top:547.00px;font-size:15.5px;color:#50555b;transform:scaleX(0.9898);">1.000,00</div>
<div class="t" style="left:1610.05px;top:547.00px;font-size:15.5px;color:#50555b;transform:scaleX(1.0131);">Telah Difakturkan</div>
<div class="r" style="left:182px;top:592px;width:15px;height:15px;border:1px solid #d8dce1;border-radius:3px;box-sizing:border-box;background:#fff"></div>
<div class="t" style="left:214.69px;top:592.00px;font-size:15.5px;color:#50555b;transform:scaleX(1.0100);">02/07/2025 11:21:28</div>
<div class="t" style="left:388.04px;top:592.00px;font-size:15.5px;color:#50555b;transform:scaleX(1.0094);">Nasi Goreng</div>
<div class="t" style="left:672.75px;top:592.00px;font-size:15.5px;color:#50555b;transform:scaleX(1.0526);">All</div>
<div class="t" style="left:1216.96px;top:592.00px;font-size:15.5px;color:#50555b;transform:scaleX(0.9943);">Divisi Amal Usaha</div>
<div class="t" style="left:1531.87px;top:592.00px;font-size:15.5px;color:#50555b;transform:scaleX(0.9799);">10.000,00</div>
<div class="t" style="left:1610.05px;top:592.00px;font-size:15.5px;color:#50555b;transform:scaleX(1.0131);">Telah Difakturkan</div>
<div class="r" style="left:182px;top:636px;width:15px;height:15px;border:1px solid #d8dce1;border-radius:3px;box-sizing:border-box;background:#fff"></div>
<div class="t" style="left:214.69px;top:637.00px;font-size:15.5px;color:#50555b;transform:scaleX(1.0100);">02/07/2025 11:07:03</div>
<div class="t" style="left:388.03px;top:637.00px;font-size:15.5px;color:#50555b;transform:scaleX(1.0128);">Le Minerale 600ml</div>
<div class="t" style="left:672.75px;top:637.00px;font-size:15.5px;color:#50555b;transform:scaleX(1.0526);">All</div>
<div class="t" style="left:1216.96px;top:637.00px;font-size:15.5px;color:#50555b;transform:scaleX(0.9943);">Divisi Amal Usaha</div>
<div class="t" style="left:1540.61px;top:637.00px;font-size:15.5px;color:#50555b;transform:scaleX(0.9755);">3.500,00</div>
<div class="t" style="left:1610.05px;top:637.00px;font-size:15.5px;color:#50555b;transform:scaleX(1.0131);">Telah Difakturkan</div>
<div class="r" style="left:182px;top:682px;width:15px;height:15px;border:1px solid #d8dce1;border-radius:3px;box-sizing:border-box;background:#fff"></div>
<div class="t" style="left:214.69px;top:682.00px;font-size:15.5px;color:#50555b;transform:scaleX(1.0100);">02/07/2025 11:07:03</div>
<div class="t" style="left:388.10px;top:682.00px;font-size:15.5px;color:#50555b;transform:scaleX(0.9638);">Nasi Pecel</div>
<div class="t" style="left:672.75px;top:682.00px;font-size:15.5px;color:#50555b;transform:scaleX(1.0526);">All</div>
<div class="t" style="left:1216.96px;top:682.00px;font-size:15.5px;color:#50555b;transform:scaleX(0.9943);">Divisi Amal Usaha</div>
<div class="t" style="left:1531.87px;top:682.00px;font-size:15.5px;color:#50555b;transform:scaleX(0.9799);">10.000,00</div>
<div class="t" style="left:1610.05px;top:682.00px;font-size:15.5px;color:#50555b;transform:scaleX(1.0131);">Telah Difakturkan</div>
<div class="r" style="left:182px;top:726px;width:15px;height:15px;border:1px solid #d8dce1;border-radius:3px;box-sizing:border-box;background:#fff"></div>
<div class="t" style="left:214.70px;top:727.00px;font-size:15.5px;color:#50555b;">02/07/2025 10:38:00</div>
<div class="t" style="left:388.04px;top:727.00px;font-size:15.5px;color:#50555b;transform:scaleX(1.0094);">Nasi Goreng</div>
<div class="t" style="left:672.75px;top:727.00px;font-size:15.5px;color:#50555b;transform:scaleX(1.0526);">All</div>
<div class="t" style="left:1216.96px;top:727.00px;font-size:15.5px;color:#50555b;transform:scaleX(0.9943);">Divisi Amal Usaha</div>
<div class="t" style="left:1531.87px;top:727.00px;font-size:15.5px;color:#50555b;transform:scaleX(0.9799);">10.000,00</div>
<div class="t" style="left:1610.05px;top:727.00px;font-size:15.5px;color:#50555b;transform:scaleX(1.0131);">Telah Difakturkan</div>
<div class="r" style="left:182px;top:771px;width:15px;height:15px;border:1px solid #d8dce1;border-radius:3px;box-sizing:border-box;background:#fff"></div>
<div class="t" style="left:214.70px;top:771.00px;font-size:15.5px;color:#50555b;">02/07/2025 10:38:00</div>
<div class="t" style="left:388.03px;top:771.00px;font-size:15.5px;color:#50555b;transform:scaleX(1.0128);">Le Minerale 600ml</div>
<div class="t" style="left:672.75px;top:771.00px;font-size:15.5px;color:#50555b;transform:scaleX(1.0526);">All</div>
<div class="t" style="left:1216.96px;top:771.00px;font-size:15.5px;color:#50555b;transform:scaleX(0.9943);">Divisi Amal Usaha</div>
<div class="t" style="left:1540.61px;top:771.00px;font-size:15.5px;color:#50555b;transform:scaleX(0.9755);">3.500,00</div>
<div class="t" style="left:1610.05px;top:771.00px;font-size:15.5px;color:#50555b;transform:scaleX(1.0131);">Telah Difakturkan</div>
<div class="r" style="left:182px;top:816px;width:15px;height:15px;border:1px solid #d8dce1;border-radius:3px;box-sizing:border-box;background:#fff"></div>
<div class="t" style="left:214.13px;top:816.00px;font-size:15.5px;color:#50555b;transform:scaleX(1.0147);">14/02/2025 11:15:47</div>
<div class="t" style="left:388.06px;top:816.00px;font-size:15.5px;color:#50555b;transform:scaleX(0.9908);">Penggaris 20 cm</div>
<div class="t" style="left:672.75px;top:816.00px;font-size:15.5px;color:#50555b;transform:scaleX(1.0526);">All</div>
<div class="t" style="left:1216.96px;top:816.00px;font-size:15.5px;color:#50555b;transform:scaleX(0.9943);">Divisi Amal Usaha</div>
<div class="t" style="left:1540.86px;top:816.00px;font-size:15.5px;color:#50555b;transform:scaleX(0.9714);">4.000,00</div>
<div class="t" style="left:1610.05px;top:816.00px;font-size:15.5px;color:#50555b;transform:scaleX(1.0131);">Telah Difakturkan</div>
<div class="r" style="left:182px;top:860px;width:15px;height:15px;border:1px solid #d8dce1;border-radius:3px;box-sizing:border-box;background:#fff"></div>
<div class="t" style="left:214.70px;top:861.00px;font-size:15.5px;color:#50555b;">07/01/2025 09:26:44</div>
<div class="t" style="left:388.62px;top:861.00px;font-size:15.5px;color:#50555b;transform:scaleX(0.9682);">Seragam Pramuka Pria</div>
<div class="t" style="left:672.75px;top:861.00px;font-size:15.5px;color:#50555b;transform:scaleX(1.0526);">All</div>
<div class="t" style="left:1216.96px;top:861.00px;font-size:15.5px;color:#50555b;transform:scaleX(0.9943);">Divisi Amal Usaha</div>
<div class="t" style="left:1523.26px;top:861.00px;font-size:15.5px;color:#50555b;transform:scaleX(0.9823);">200.000,00</div>
<div class="t" style="left:1610.05px;top:861.00px;font-size:15.5px;color:#50555b;transform:scaleX(1.0131);">Telah Difakturkan</div>
<div class="r" style="left:182px;top:906px;width:15px;height:15px;border:1px solid #d8dce1;border-radius:3px;box-sizing:border-box;background:#fff"></div>
<div class="t" style="left:388.62px;top:905.00px;font-size:15.5px;color:#50555b;transform:scaleX(0.9682);">Seragam Pramuka Pria</div>
<div class="t" style="left:672.75px;top:905.00px;font-size:15.5px;color:#50555b;transform:scaleX(1.0526);">All</div>
<div class="t" style="left:1216.96px;top:905.00px;font-size:15.5px;color:#50555b;transform:scaleX(0.9943);">Divisi Amal Usaha</div>
<div class="t" style="left:1610.05px;top:905.00px;font-size:15.5px;color:#50555b;transform:scaleX(1.0131);">Telah Difakturkan</div>
<div class="r" style="left:1911px;top:120px;width:7px;height:788px;background:#f6f7f9;"></div>
<div class="r" style="left:1911px;top:119px;width:7px;height:1px;background:#dee2e6;"></div>
<div class="r" style="left:1911px;top:120px;width:7px;height:570px;border-radius:5px 0 0 5px;background:#8a8a8a"></div>
<div class="r" style="left:465.8px;top:109.6px;width:862.2px;height:411.2px;border:3.8px solid #ff0000;border-radius:3px;box-sizing:border-box;background:#fff"></div>
<svg class="r" style="left:502px;top:137px" width="15" height="13" viewBox="0 0 15 13"><path d="M0.3 0.3 L14 0.3 L8.8 6 L8.8 13 L5.5 10.4 L5.5 6Z" fill="#0c5953"/></svg>
<div class="t" style="left:524.57px;top:135.00px;font-size:17.1px;color:#2a2e33;transform:scaleX(1.0242);text-shadow:0.45px 0 0 #2a2e33;">Penyaring</div>
<div class="r" style="left:484px;top:164px;width:249px;height:30px;background:#e9e9e9;"></div>
<svg class="r" style="left:490px;top:175px" width="11" height="9" viewBox="0 0 11 9"><path d="M1 4.5 L4 7.5 L10 1.2" fill="none" stroke="#1d9a5a" stroke-width="2.2"/></svg>
<div class="t" style="left:507.15px;top:171.00px;font-size:16.2px;color:#2a2e33;text-shadow:0.45px 0 0 #2a2e33;">Telah Difakturkan</div>
<div class="t" style="left:506.32px;top:203.00px;font-size:15.5px;color:#50555b;transform:scaleX(1.0249);">Belum Difakturkan</div>
<div class="r" style="left:484px;top:234px;width:249px;height:1px;background:#dfe2e6;"></div>
<div class="t" style="left:507.25px;top:252.00px;font-size:15.5px;color:#50555b;transform:scaleX(0.9887);">Tanggal Order</div>
<svg class="r" style="left:714px;top:256px" width="10" height="6" viewBox="0 0 10 6"><path d="M0.5 0.5 L9.5 0.5 L5 5.5Z" fill="#3f444a"/></svg>
<div class="r" style="left:484px;top:283px;width:249px;height:1px;background:#dfe2e6;"></div>
<div class="t" style="left:507.25px;top:301.00px;font-size:15.5px;color:#50555b;transform:scaleX(0.9907);">Tambahkan Penyaring Sendiri</div>
<div class="r" style="left:751px;top:129px;width:1px;height:194px;background:#dfe2e6;"></div>
<svg class="r" style="left:788px;top:133px" width="18" height="19" viewBox="0 0 18 19"><path d="M8.5 0.3 L16.8 4.6 L8.5 8.9 L0.2 4.6Z" fill="#1f9d55"/><path d="M1.8 7.3 L8.5 10.8 L15.2 7.3 L16.8 8.6 L8.5 12.9 L0.2 8.6Z" fill="#1f9d55"/><path d="M1.8 11.3 L8.5 14.8 L15.2 11.3 L16.8 12.6 L8.5 16.9 L0.2 12.6Z" fill="#1f9d55"/></svg>
<div class="t" style="left:814.52px;top:135.00px;font-size:17.1px;color:#2a2e33;transform:scaleX(1.0594);text-shadow:0.45px 0 0 #2a2e33;">Dikelompokkan</div>
<div class="t" style="left:788.58px;top:161.00px;font-size:17.1px;color:#2a2e33;transform:scaleX(1.0178);text-shadow:0.45px 0 0 #2a2e33;">berdasarkan</div>
<div class="t" style="left:792.56px;top:197.00px;font-size:15.5px;color:#50555b;transform:scaleX(0.9891);">Pengguna</div>
<div class="t" style="left:792.55px;top:228.00px;font-size:15.5px;color:#50555b;transform:scaleX(1.0039);">Karyawan</div>
<div class="t" style="left:792.54px;top:259.00px;font-size:15.5px;color:#50555b;transform:scaleX(1.0105);">POS</div>
<div class="t" style="left:792.56px;top:289.00px;font-size:15.5px;color:#50555b;transform:scaleX(0.9897);">Produk</div>
<div class="t" style="left:792.56px;top:321.00px;font-size:15.5px;color:#50555b;transform:scaleX(0.9899);">Kategori Produk</div>
<div class="t" style="left:792.55px;top:350.00px;font-size:15.5px;color:#50555b;transform:scaleX(0.9965);">Metode Pembayaran</div>
<div class="t" style="left:792.56px;top:380.00px;font-size:15.5px;color:#50555b;transform:scaleX(0.9943);">Kategori Point of Sale</div>
<div class="r" style="left:770px;top:411px;width:277px;height:1px;background:#dfe2e6;"></div>
<div class="t" style="left:793.45px;top:430.00px;font-size:15.5px;color:#50555b;transform:scaleX(0.9887);">Tanggal Order</div>
<svg class="r" style="left:1028px;top:432px" width="10" height="6" viewBox="0 0 10 6"><path d="M0.5 0.5 L9.5 0.5 L5 5.5Z" fill="#3f444a"/></svg>
<div class="r" style="left:770px;top:461px;width:277px;height:1px;background:#dfe2e6;"></div>
<div class="t" style="left:793.46px;top:479.00px;font-size:15.5px;color:#50555b;transform:scaleX(0.9852);">Tambahkan Grup Kustom</div>
<svg class="r" style="left:1024px;top:483px" width="9" height="6" viewBox="0 0 9 6"><path d="M0.5 0.5 L8.5 0.5 L4.5 5Z" fill="#7a8087"/></svg>
<div class="r" style="left:1065px;top:129px;width:1px;height:372px;background:#dfe2e6;"></div>
<svg class="r" style="left:1101px;top:134px" width="19" height="17" viewBox="0 0 19 17"><path d="M9.5 0.5 L12 6 L18.2 6.4 L13.5 10.4 L15 16.5 L9.5 13.2 L4 16.5 L5.5 10.4 L0.8 6.4 L7 6Z" fill="#f3c900"/></svg>
<div class="t" style="left:1127.59px;top:135.00px;font-size:17.3px;color:#2a2e33;transform:scaleX(1.0088);text-shadow:0.45px 0 0 #2a2e33;">Favorit</div>
<div class="t" style="left:1106.60px;top:172.00px;font-size:15.5px;color:#50555b;transform:scaleX(0.9587);">Per session</div>
<svg class="r" style="left:1272px;top:170px" width="13" height="16" viewBox="0 0 13 16"><path d="M0.5 2.8 L12.5 2.8 M4.5 2.8 L4.5 0.8 L8.5 0.8 L8.5 2.8" fill="none" stroke="#4a5057" stroke-width="1.2"/><path d="M1.8 4.2 L11.2 4.2 L10.6 14.6 L2.4 14.6Z" fill="none" stroke="#4a5057" stroke-width="1.3"/><path d="M4.8 6 L4.8 12.8 M6.5 6 L6.5 12.8 M8.2 6 L8.2 12.8" stroke="#4a5057" stroke-width="1"/></svg>
<div class="r" style="left:1084px;top:203px;width:223px;height:1px;background:#dfe2e6;"></div>
<div class="t" style="left:1107.10px;top:222.00px;font-size:15.5px;color:#50555b;transform:scaleX(0.9966);">Simpan pencarian saat ini</div>
<svg class="r" style="left:1289px;top:225px" width="10" height="6" viewBox="0 0 10 6"><path d="M0.5 0.5 L9.5 0.5 L5 5.5Z" fill="#3f444a"/></svg>
</body></html>
